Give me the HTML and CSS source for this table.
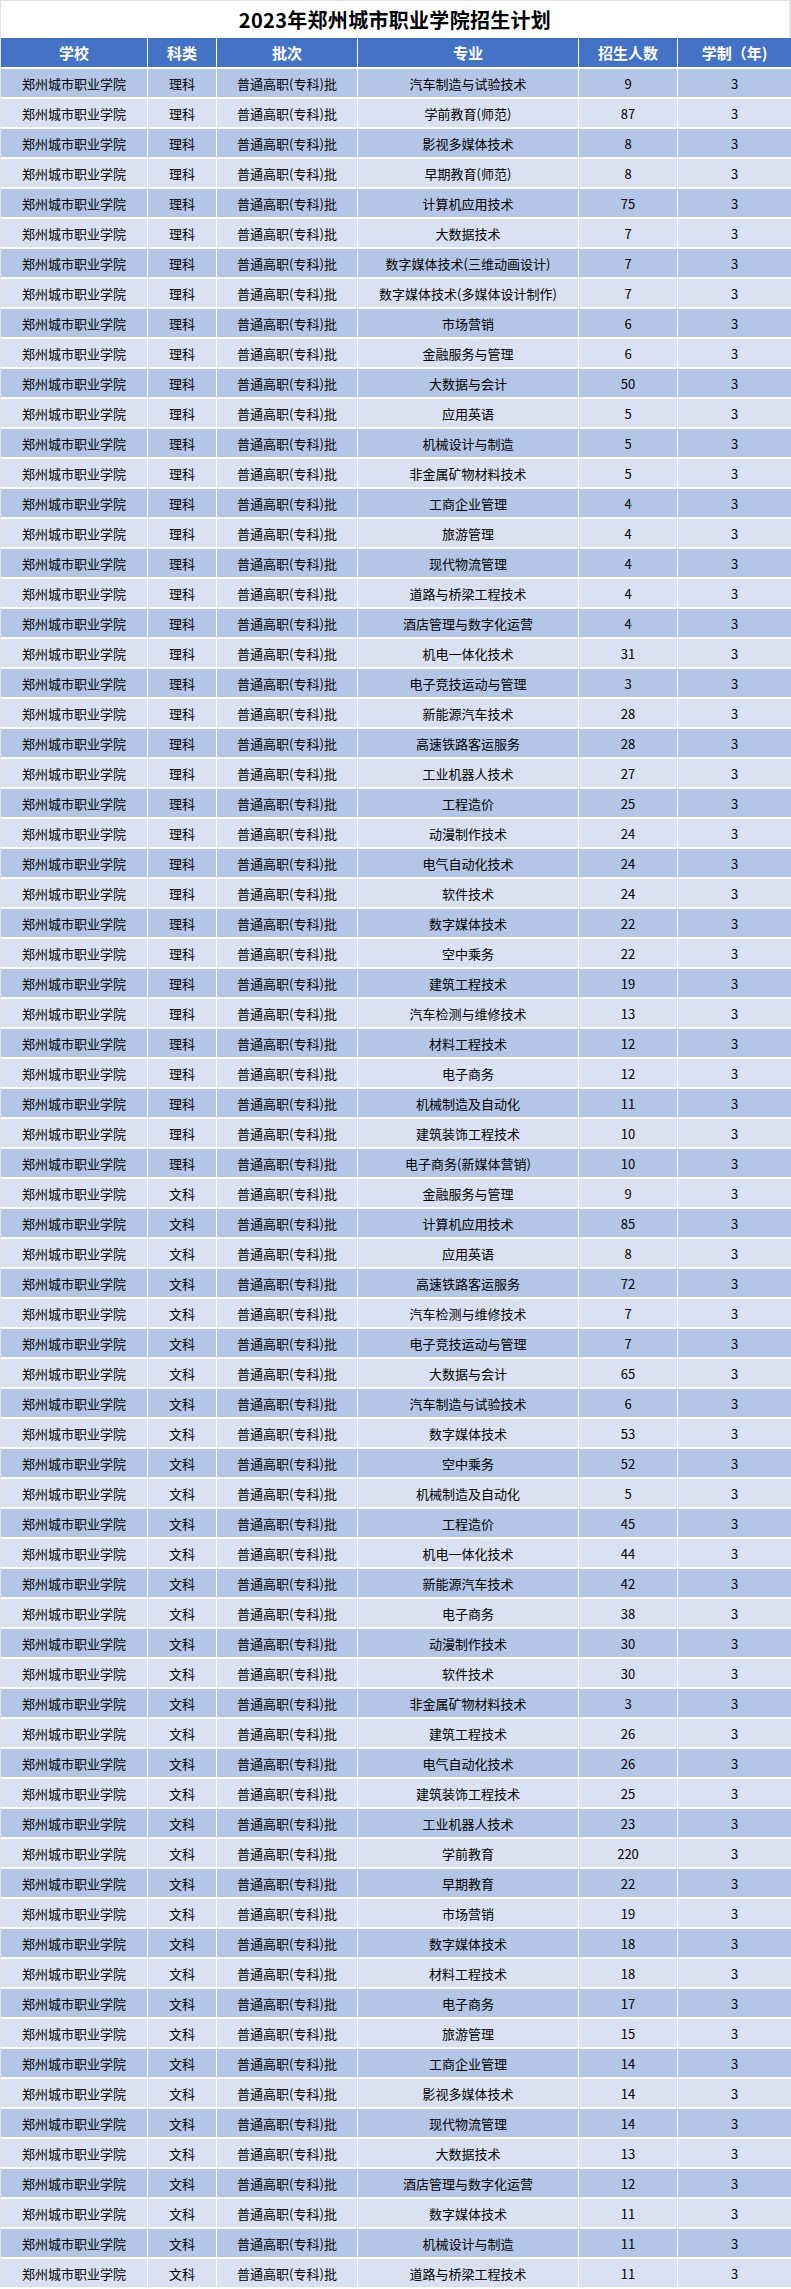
FILE: index.html
```html
<!DOCTYPE html>
<html lang="zh-CN">
<head>
<meta charset="utf-8">
<title>2023年郑州城市职业学院招生计划</title>
<link rel="stylesheet" href="styles.css">
</head>
<body>
<div class="sheet">
  <div class="title">2023年郑州城市职业学院招生计划</div>
  <div class="table">
    <div class="row head"><div>学校</div><div>科类</div><div>批次</div><div>专业</div><div>招生人数</div><div>学制（年)</div></div>
    <div class="row a"><div>郑州城市职业学院</div><div>理科</div><div>普通高职(专科)批</div><div>汽车制造与试验技术</div><div>9</div><div>3</div></div>
    <div class="row b"><div>郑州城市职业学院</div><div>理科</div><div>普通高职(专科)批</div><div>学前教育(师范)</div><div>87</div><div>3</div></div>
    <div class="row a"><div>郑州城市职业学院</div><div>理科</div><div>普通高职(专科)批</div><div>影视多媒体技术</div><div>8</div><div>3</div></div>
    <div class="row b"><div>郑州城市职业学院</div><div>理科</div><div>普通高职(专科)批</div><div>早期教育(师范)</div><div>8</div><div>3</div></div>
    <div class="row a"><div>郑州城市职业学院</div><div>理科</div><div>普通高职(专科)批</div><div>计算机应用技术</div><div>75</div><div>3</div></div>
    <div class="row b"><div>郑州城市职业学院</div><div>理科</div><div>普通高职(专科)批</div><div>大数据技术</div><div>7</div><div>3</div></div>
    <div class="row a"><div>郑州城市职业学院</div><div>理科</div><div>普通高职(专科)批</div><div>数字媒体技术(三维动画设计)</div><div>7</div><div>3</div></div>
    <div class="row b"><div>郑州城市职业学院</div><div>理科</div><div>普通高职(专科)批</div><div>数字媒体技术(多媒体设计制作)</div><div>7</div><div>3</div></div>
    <div class="row a"><div>郑州城市职业学院</div><div>理科</div><div>普通高职(专科)批</div><div>市场营销</div><div>6</div><div>3</div></div>
    <div class="row b"><div>郑州城市职业学院</div><div>理科</div><div>普通高职(专科)批</div><div>金融服务与管理</div><div>6</div><div>3</div></div>
    <div class="row a"><div>郑州城市职业学院</div><div>理科</div><div>普通高职(专科)批</div><div>大数据与会计</div><div>50</div><div>3</div></div>
    <div class="row b"><div>郑州城市职业学院</div><div>理科</div><div>普通高职(专科)批</div><div>应用英语</div><div>5</div><div>3</div></div>
    <div class="row a"><div>郑州城市职业学院</div><div>理科</div><div>普通高职(专科)批</div><div>机械设计与制造</div><div>5</div><div>3</div></div>
    <div class="row b"><div>郑州城市职业学院</div><div>理科</div><div>普通高职(专科)批</div><div>非金属矿物材料技术</div><div>5</div><div>3</div></div>
    <div class="row a"><div>郑州城市职业学院</div><div>理科</div><div>普通高职(专科)批</div><div>工商企业管理</div><div>4</div><div>3</div></div>
    <div class="row b"><div>郑州城市职业学院</div><div>理科</div><div>普通高职(专科)批</div><div>旅游管理</div><div>4</div><div>3</div></div>
    <div class="row a"><div>郑州城市职业学院</div><div>理科</div><div>普通高职(专科)批</div><div>现代物流管理</div><div>4</div><div>3</div></div>
    <div class="row b"><div>郑州城市职业学院</div><div>理科</div><div>普通高职(专科)批</div><div>道路与桥梁工程技术</div><div>4</div><div>3</div></div>
    <div class="row a"><div>郑州城市职业学院</div><div>理科</div><div>普通高职(专科)批</div><div>酒店管理与数字化运营</div><div>4</div><div>3</div></div>
    <div class="row b"><div>郑州城市职业学院</div><div>理科</div><div>普通高职(专科)批</div><div>机电一体化技术</div><div>31</div><div>3</div></div>
    <div class="row a"><div>郑州城市职业学院</div><div>理科</div><div>普通高职(专科)批</div><div>电子竞技运动与管理</div><div>3</div><div>3</div></div>
    <div class="row b"><div>郑州城市职业学院</div><div>理科</div><div>普通高职(专科)批</div><div>新能源汽车技术</div><div>28</div><div>3</div></div>
    <div class="row a"><div>郑州城市职业学院</div><div>理科</div><div>普通高职(专科)批</div><div>高速铁路客运服务</div><div>28</div><div>3</div></div>
    <div class="row b"><div>郑州城市职业学院</div><div>理科</div><div>普通高职(专科)批</div><div>工业机器人技术</div><div>27</div><div>3</div></div>
    <div class="row a"><div>郑州城市职业学院</div><div>理科</div><div>普通高职(专科)批</div><div>工程造价</div><div>25</div><div>3</div></div>
    <div class="row b"><div>郑州城市职业学院</div><div>理科</div><div>普通高职(专科)批</div><div>动漫制作技术</div><div>24</div><div>3</div></div>
    <div class="row a"><div>郑州城市职业学院</div><div>理科</div><div>普通高职(专科)批</div><div>电气自动化技术</div><div>24</div><div>3</div></div>
    <div class="row b"><div>郑州城市职业学院</div><div>理科</div><div>普通高职(专科)批</div><div>软件技术</div><div>24</div><div>3</div></div>
    <div class="row a"><div>郑州城市职业学院</div><div>理科</div><div>普通高职(专科)批</div><div>数字媒体技术</div><div>22</div><div>3</div></div>
    <div class="row b"><div>郑州城市职业学院</div><div>理科</div><div>普通高职(专科)批</div><div>空中乘务</div><div>22</div><div>3</div></div>
    <div class="row a"><div>郑州城市职业学院</div><div>理科</div><div>普通高职(专科)批</div><div>建筑工程技术</div><div>19</div><div>3</div></div>
    <div class="row b"><div>郑州城市职业学院</div><div>理科</div><div>普通高职(专科)批</div><div>汽车检测与维修技术</div><div>13</div><div>3</div></div>
    <div class="row a"><div>郑州城市职业学院</div><div>理科</div><div>普通高职(专科)批</div><div>材料工程技术</div><div>12</div><div>3</div></div>
    <div class="row b"><div>郑州城市职业学院</div><div>理科</div><div>普通高职(专科)批</div><div>电子商务</div><div>12</div><div>3</div></div>
    <div class="row a"><div>郑州城市职业学院</div><div>理科</div><div>普通高职(专科)批</div><div>机械制造及自动化</div><div>11</div><div>3</div></div>
    <div class="row b"><div>郑州城市职业学院</div><div>理科</div><div>普通高职(专科)批</div><div>建筑装饰工程技术</div><div>10</div><div>3</div></div>
    <div class="row a"><div>郑州城市职业学院</div><div>理科</div><div>普通高职(专科)批</div><div>电子商务(新媒体营销)</div><div>10</div><div>3</div></div>
    <div class="row b"><div>郑州城市职业学院</div><div>文科</div><div>普通高职(专科)批</div><div>金融服务与管理</div><div>9</div><div>3</div></div>
    <div class="row a"><div>郑州城市职业学院</div><div>文科</div><div>普通高职(专科)批</div><div>计算机应用技术</div><div>85</div><div>3</div></div>
    <div class="row b"><div>郑州城市职业学院</div><div>文科</div><div>普通高职(专科)批</div><div>应用英语</div><div>8</div><div>3</div></div>
    <div class="row a"><div>郑州城市职业学院</div><div>文科</div><div>普通高职(专科)批</div><div>高速铁路客运服务</div><div>72</div><div>3</div></div>
    <div class="row b"><div>郑州城市职业学院</div><div>文科</div><div>普通高职(专科)批</div><div>汽车检测与维修技术</div><div>7</div><div>3</div></div>
    <div class="row a"><div>郑州城市职业学院</div><div>文科</div><div>普通高职(专科)批</div><div>电子竞技运动与管理</div><div>7</div><div>3</div></div>
    <div class="row b"><div>郑州城市职业学院</div><div>文科</div><div>普通高职(专科)批</div><div>大数据与会计</div><div>65</div><div>3</div></div>
    <div class="row a"><div>郑州城市职业学院</div><div>文科</div><div>普通高职(专科)批</div><div>汽车制造与试验技术</div><div>6</div><div>3</div></div>
    <div class="row b"><div>郑州城市职业学院</div><div>文科</div><div>普通高职(专科)批</div><div>数字媒体技术</div><div>53</div><div>3</div></div>
    <div class="row a"><div>郑州城市职业学院</div><div>文科</div><div>普通高职(专科)批</div><div>空中乘务</div><div>52</div><div>3</div></div>
    <div class="row b"><div>郑州城市职业学院</div><div>文科</div><div>普通高职(专科)批</div><div>机械制造及自动化</div><div>5</div><div>3</div></div>
    <div class="row a"><div>郑州城市职业学院</div><div>文科</div><div>普通高职(专科)批</div><div>工程造价</div><div>45</div><div>3</div></div>
    <div class="row b"><div>郑州城市职业学院</div><div>文科</div><div>普通高职(专科)批</div><div>机电一体化技术</div><div>44</div><div>3</div></div>
    <div class="row a"><div>郑州城市职业学院</div><div>文科</div><div>普通高职(专科)批</div><div>新能源汽车技术</div><div>42</div><div>3</div></div>
    <div class="row b"><div>郑州城市职业学院</div><div>文科</div><div>普通高职(专科)批</div><div>电子商务</div><div>38</div><div>3</div></div>
    <div class="row a"><div>郑州城市职业学院</div><div>文科</div><div>普通高职(专科)批</div><div>动漫制作技术</div><div>30</div><div>3</div></div>
    <div class="row b"><div>郑州城市职业学院</div><div>文科</div><div>普通高职(专科)批</div><div>软件技术</div><div>30</div><div>3</div></div>
    <div class="row a"><div>郑州城市职业学院</div><div>文科</div><div>普通高职(专科)批</div><div>非金属矿物材料技术</div><div>3</div><div>3</div></div>
    <div class="row b"><div>郑州城市职业学院</div><div>文科</div><div>普通高职(专科)批</div><div>建筑工程技术</div><div>26</div><div>3</div></div>
    <div class="row a"><div>郑州城市职业学院</div><div>文科</div><div>普通高职(专科)批</div><div>电气自动化技术</div><div>26</div><div>3</div></div>
    <div class="row b"><div>郑州城市职业学院</div><div>文科</div><div>普通高职(专科)批</div><div>建筑装饰工程技术</div><div>25</div><div>3</div></div>
    <div class="row a"><div>郑州城市职业学院</div><div>文科</div><div>普通高职(专科)批</div><div>工业机器人技术</div><div>23</div><div>3</div></div>
    <div class="row b"><div>郑州城市职业学院</div><div>文科</div><div>普通高职(专科)批</div><div>学前教育</div><div>220</div><div>3</div></div>
    <div class="row a"><div>郑州城市职业学院</div><div>文科</div><div>普通高职(专科)批</div><div>早期教育</div><div>22</div><div>3</div></div>
    <div class="row b"><div>郑州城市职业学院</div><div>文科</div><div>普通高职(专科)批</div><div>市场营销</div><div>19</div><div>3</div></div>
    <div class="row a"><div>郑州城市职业学院</div><div>文科</div><div>普通高职(专科)批</div><div>数字媒体技术</div><div>18</div><div>3</div></div>
    <div class="row b"><div>郑州城市职业学院</div><div>文科</div><div>普通高职(专科)批</div><div>材料工程技术</div><div>18</div><div>3</div></div>
    <div class="row a"><div>郑州城市职业学院</div><div>文科</div><div>普通高职(专科)批</div><div>电子商务</div><div>17</div><div>3</div></div>
    <div class="row b"><div>郑州城市职业学院</div><div>文科</div><div>普通高职(专科)批</div><div>旅游管理</div><div>15</div><div>3</div></div>
    <div class="row a"><div>郑州城市职业学院</div><div>文科</div><div>普通高职(专科)批</div><div>工商企业管理</div><div>14</div><div>3</div></div>
    <div class="row b"><div>郑州城市职业学院</div><div>文科</div><div>普通高职(专科)批</div><div>影视多媒体技术</div><div>14</div><div>3</div></div>
    <div class="row a"><div>郑州城市职业学院</div><div>文科</div><div>普通高职(专科)批</div><div>现代物流管理</div><div>14</div><div>3</div></div>
    <div class="row b"><div>郑州城市职业学院</div><div>文科</div><div>普通高职(专科)批</div><div>大数据技术</div><div>13</div><div>3</div></div>
    <div class="row a"><div>郑州城市职业学院</div><div>文科</div><div>普通高职(专科)批</div><div>酒店管理与数字化运营</div><div>12</div><div>3</div></div>
    <div class="row b"><div>郑州城市职业学院</div><div>文科</div><div>普通高职(专科)批</div><div>数字媒体技术</div><div>11</div><div>3</div></div>
    <div class="row a"><div>郑州城市职业学院</div><div>文科</div><div>普通高职(专科)批</div><div>机械设计与制造</div><div>11</div><div>3</div></div>
    <div class="row b"><div>郑州城市职业学院</div><div>文科</div><div>普通高职(专科)批</div><div>道路与桥梁工程技术</div><div>11</div><div>3</div></div>
  </div>
</div>
</body>
</html>
```

FILE: styles.css
```css
html, body {
  margin: 0;
  padding: 0;
  background: #ffffff;
}

body {
  font-family: "Noto Sans CJK SC", "Noto Sans", sans-serif;
  color: #000000;
}

.sheet {
  width: 791px;
  box-sizing: border-box;
  border-left: 1px solid #e2e2e2;
  background: #ffffff;
}

.title {
  height: 37px;
  box-sizing: border-box;
  border-top: 1px solid #e4e4e4;
  border-right: 2px solid #e4e4e4;
  display: flex;
  align-items: center;
  justify-content: center;
  font-size: 20px;
  font-weight: 700;
  letter-spacing: 0.3px;
  padding-top: 1px;
}

.table {
  display: flex;
  flex-direction: column;
  gap: 2px;
  margin-top: 1px;
}

.row {
  display: grid;
  grid-template-columns: 146px 68px 140px 220px 98px 113px;
  column-gap: 1px;
  height: 28px;
}

.row > div {
  display: flex;
  align-items: center;
  justify-content: center;
  font-size: 13px;
  white-space: nowrap;
  overflow: hidden;
}

.row.head {
  height: 29px;
}

.row.head > div {
  background: #4472c4;
  color: #ffffff;
  font-size: 15px;
  font-weight: 700;
}

.row.a > div {
  background: #b4c6e7;
}

.row.b > div {
  background: #d9e1f2;
}
```
